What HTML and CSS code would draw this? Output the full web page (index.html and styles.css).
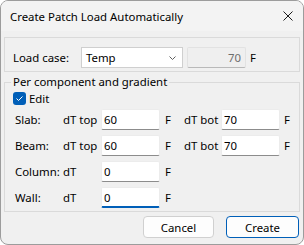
FILE: index.html
```html
<!DOCTYPE html>
<html lang="en">
<head>
    <meta charset="UTF-8">
    <title>Create Patch Load Automatically</title>
    <link rel="stylesheet" href="styles.css">
</head>
<body>
    <div class="window">
        <div class="titlebar">
            <span class="title">Create Patch Load Automatically</span>
            <svg class="close" width="10" height="10" viewBox="0 0 10 10">
                <path d="M0.5 0.5 L9.5 9.5 M9.5 0.5 L0.5 9.5" stroke="#1b1b1b" stroke-width="1" fill="none"/>
            </svg>
        </div>
        <div class="content">
            <fieldset class="group load-group">
                <div class="load-row">
                    <span class="load-label">Load case:</span>
                    <div class="combo">
                        <span>Temp</span>
                        <svg width="7" height="4" viewBox="0 0 7 4">
                            <path d="M0.5 0.5 L3.5 3.5 L6.5 0.5" stroke="#606060" stroke-width="1" fill="none"/>
                        </svg>
                    </div>
                    <input class="field disabled" type="text" value="70" disabled>
                    <span class="unit">F</span>
                </div>
            </fieldset>

            <fieldset class="group comp-group">
                <legend>Per component and gradient</legend>
                <div class="check-row">
                    <span class="checkbox">
                        <svg width="13" height="13" viewBox="0 0 13 13">
                            <path d="M3.5 6.5 L5.5 8.5 L9.5 4.5" stroke="#fff" stroke-width="1" fill="none"/>
                        </svg>
                    </span>
                    <span>Edit</span>
                </div>
                <div class="grid">
                    <span>Slab:</span>
                    <span>dT top</span>
                    <input class="field" type="text" value="60">
                    <span class="unit">F</span>
                    <span>dT bot</span>
                    <input class="field" type="text" value="70">
                    <span class="unit2">F</span>

                    <span>Beam:</span>
                    <span>dT top</span>
                    <input class="field" type="text" value="60">
                    <span class="unit">F</span>
                    <span>dT bot</span>
                    <input class="field" type="text" value="70">
                    <span class="unit2">F</span>

                    <span>Column:</span>
                    <span>dT</span>
                    <input class="field" type="text" value="0">
                    <span class="unit">F</span>
                    <span></span><span></span><span></span>

                    <span>Wall:</span>
                    <span>dT</span>
                    <input class="field focused" type="text" value="0">
                    <span class="unit">F</span>
                    <span></span><span></span><span></span>
                </div>
            </fieldset>

            <div class="buttons">
                <button class="btn cancel">Cancel</button>
                <button class="btn default">Create</button>
            </div>
        </div>
    </div>
</body>
</html>
```

FILE: styles.css
```css
body {
    margin: 0;
    padding: 0;
    background: #ffffff;
    font-family: "Noto Sans", "DejaVu Sans", sans-serif;
    font-size: 11.4px;
    color: #000;
}
.window {
    width: 304px;
    height: 245px;
    box-sizing: border-box;
    border: 1px solid #9c9c9c;
    border-radius: 8px;
    overflow: hidden;
    background: #f0f0f0;
}
.titlebar {
    height: 30px;
    display: flex;
    align-items: center;
    justify-content: space-between;
    padding: 0 10px 0 9px;
    background: #f3f3f3;
}
.title {
    font-size: 11.4px;
    line-height: 16px;
    margin-top: 1px;
}
.close {
    display: block;
}
.content {
    padding: 6px 3px 0 3px;
}
.group {
    margin: 0;
    min-width: 0;
    border: 1px solid #dadada;
}
.load-group {
    padding: 9px 0 3px 8px;
}
.load-row {
    display: flex;
    align-items: center;
    height: 21px;
}
.load-label {
    width: 68px;
}
.combo {
    width: 102px;
    height: 21px;
    box-sizing: border-box;
    border: 1px solid #cfcfcf;
    background: #fff;
    display: flex;
    align-items: center;
    justify-content: space-between;
    padding: 0 6px 0 4px;
}
.field {
    width: 59px;
    height: 21px;
    box-sizing: border-box;
    margin: 0;
    padding: 0 2px;
    border: 1px solid #ececec;
    border-bottom: 1px solid #8c8c8c;
    border-radius: 2px;
    background: #fff;
    font-family: inherit;
    font-size: 11.4px;
    color: #000;
    outline: none;
}
.load-row .field {
    margin-left: 4px;
}
.field.disabled {
    background: #efefef;
    border-color: #e2e2e2;
    border-bottom-color: #b9b9b9;
    color: #6d6d6d;
    text-align: right;
    padding-right: 4px;
}
.field.focused {
    border-bottom: 2px solid #005fb8;
}
.unit {
    padding-left: 5px;
}
.load-row .unit {
    padding-left: 4px;
}
.unit2 {
    padding-left: 4px;
}
.comp-group {
    margin-top: 2px;
    padding: 0 0 3px 0;
}
.comp-group legend {
    margin-left: 6px;
    padding: 0 2px;
    line-height: 16px;
}
.check-row {
    display: flex;
    align-items: center;
    height: 16px;
    padding-left: 8px;
}
.checkbox {
    width: 13px;
    height: 13px;
    border-radius: 3px;
    background: #005fb8;
    margin-right: 3px;
    display: flex;
}
.grid {
    display: grid;
    grid-template-columns: 48px 38px 59px 24px 37px 59px auto;
    grid-auto-rows: 21px;
    row-gap: 5px;
    align-items: center;
    margin-top: 3px;
    padding-left: 10px;
}
.buttons {
    display: flex;
    justify-content: flex-end;
    gap: 12px;
    margin-top: 4px;
    padding-right: 1px;
}
.btn {
    height: 22px;
    box-sizing: border-box;
    margin: 0;
    padding: 0;
    border: 1px solid #d0d0d0;
    border-radius: 4px;
    background: #fdfdfd;
    font-family: inherit;
    font-size: 11.4px;
    color: #000;
}
.cancel {
    width: 71px;
}
.default {
    width: 73px;
    border-color: #005fb8;
}
```
